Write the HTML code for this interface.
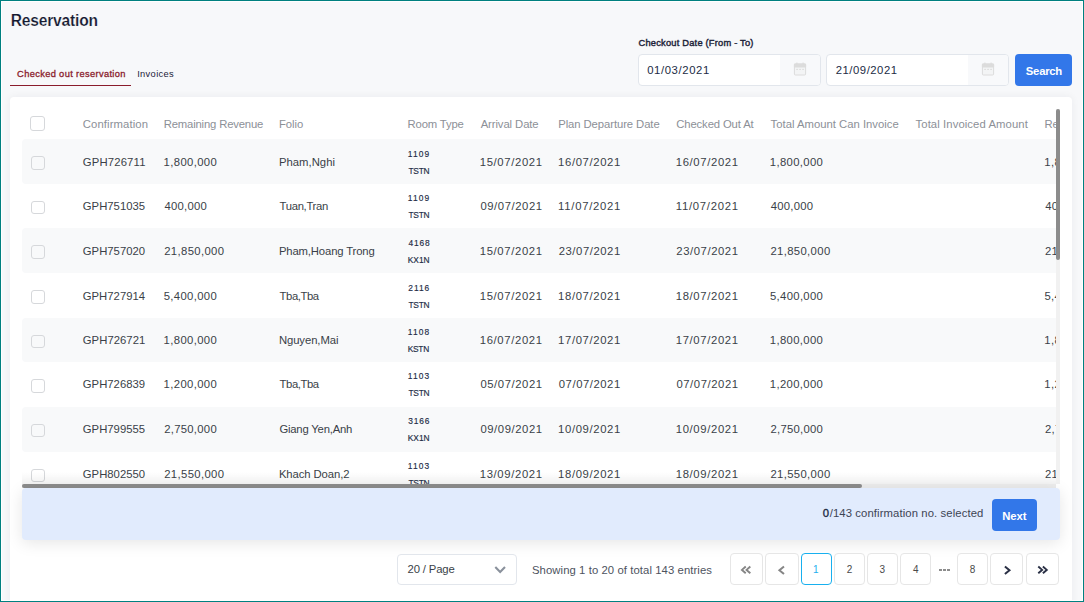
<!DOCTYPE html><html><head><meta charset="utf-8"><title>Reservation</title><style>
html,body{margin:0;padding:0}
body{width:1084px;height:602px;overflow:hidden;background:#f7f8fa;font-family:"Liberation Sans",sans-serif;color:#3a3f48;position:relative}
*{box-sizing:border-box}
.a{position:absolute}
.t{position:absolute;white-space:nowrap}
#frame{position:absolute;left:0;top:0;width:1084px;height:602px;border:1px solid #008080;box-shadow:inset 0 0 0 1px #fff;z-index:50}
.inp{position:absolute;top:54px;height:32px;width:183px;border:1px solid #e2e6ec;border-radius:4px;background:#fff;overflow:hidden}
.addon{position:absolute;right:0;top:0;width:40px;height:30px;background:#f8f9fb}
.btn{position:absolute;background:#3277e9;border-radius:4px}
#card{left:10px;top:97px;width:1062px;height:520px;background:#fff;border-radius:4px;box-shadow:0 0 9px rgba(30,35,50,0.06)}
#tbl{left:22px;top:109px;width:1034px;height:375px;overflow:hidden}
.row{position:absolute;left:0;width:1100px;background:#f8f9fa;border-radius:4px 0 0 4px}
.cb{position:absolute;border:1px solid #d6d8db;border-radius:3px}
.pb{position:absolute;top:553px;height:32px;border:1px solid #e6e6e6;border-radius:4px;background:#fff}
</style></head><body>
<div class="t" style="left:10.80px;top:11px;font-size:15.6px;line-height:19px;letter-spacing:-0.204px;color:#151a30;font-weight:bold;-webkit-text-stroke:0.2px #f7f8fa;">Reservation</div>
<div class="t" style="left:17.08px;top:68px;font-size:9.3px;line-height:12px;letter-spacing:0.346px;color:#8a1c2c;-webkit-text-stroke:0.3px #8a1c2c;">Checked out reservation</div>
<div class="a" style="left:10px;top:85px;width:121px;height:1px;background:#8a1c2c"></div>
<div class="t" style="left:137.13px;top:68px;font-size:9.3px;line-height:12px;letter-spacing:0.357px;color:#1b2138;">Invoices</div>
<div class="t" style="left:638.56px;top:37px;font-size:9.3px;line-height:12px;letter-spacing:0.209px;color:#1c2238;-webkit-text-stroke:0.4px #1c2238;">Checkout Date (From - To)</div>
<div class="inp" style="left:638px"><div class="addon"><svg class="a" style="left:13px;top:7.4px" width="14" height="15" viewBox="0 0 14 15"><rect x="1.4" y="2" width="11.2" height="11" rx="1" fill="#f3f4f5" stroke="#dcdcdc" stroke-width="1"/><rect x="0.9" y="1.6" width="12.2" height="4" rx="1" fill="#dcdcdc"/><rect x="3.3" y="0.6" width="1.2" height="1.6" fill="#dcdcdc"/><rect x="9.5" y="0.6" width="1.2" height="1.6" fill="#dcdcdc"/><rect x="3.4" y="6.9" width="1.3" height="1" fill="#d4d4d4"/><rect x="6.4" y="6.9" width="1.3" height="1" fill="#d4d4d4"/><rect x="9.4" y="6.9" width="1.3" height="1" fill="#d4d4d4"/></svg></div></div>
<div class="inp" style="left:826px"><div class="addon"><svg class="a" style="left:13px;top:7.4px" width="14" height="15" viewBox="0 0 14 15"><rect x="1.4" y="2" width="11.2" height="11" rx="1" fill="#f3f4f5" stroke="#dcdcdc" stroke-width="1"/><rect x="0.9" y="1.6" width="12.2" height="4" rx="1" fill="#dcdcdc"/><rect x="3.3" y="0.6" width="1.2" height="1.6" fill="#dcdcdc"/><rect x="9.5" y="0.6" width="1.2" height="1.6" fill="#dcdcdc"/><rect x="3.4" y="6.9" width="1.3" height="1" fill="#d4d4d4"/><rect x="6.4" y="6.9" width="1.3" height="1" fill="#d4d4d4"/><rect x="9.4" y="6.9" width="1.3" height="1" fill="#d4d4d4"/></svg></div></div>
<div class="t" style="left:647.20px;top:63px;font-size:11.3px;line-height:14px;letter-spacing:0.610px;color:#222b45;">01/03/2021</div>
<div class="t" style="left:835.71px;top:63px;font-size:11.3px;line-height:14px;letter-spacing:0.531px;color:#222b45;">21/09/2021</div>
<div class="btn" style="left:1015px;top:54px;width:57px;height:32px"></div>
<div class="t" style="left:1025.86px;top:64px;font-size:11.3px;line-height:14px;letter-spacing:-0.272px;color:#fff;font-weight:bold;">Search</div>
<div id="card" class="a"></div>
<div id="tbl" class="a">
<div class="cb" style="left:8px;top:7px;width:15px;height:15px;background:#fff"></div>
<div class="t" style="left:60.78px;top:8px;font-size:11.3px;line-height:14px;letter-spacing:0.102px;color:#8c9097;">Confirmation</div>
<div class="t" style="left:141.70px;top:8px;font-size:11.3px;line-height:14px;letter-spacing:-0.169px;color:#8c9097;">Remaining Revenue</div>
<div class="t" style="left:256.90px;top:8px;font-size:11.3px;line-height:14px;letter-spacing:0.003px;color:#8c9097;">Folio</div>
<div class="t" style="left:385.60px;top:8px;font-size:11.3px;line-height:14px;letter-spacing:-0.163px;color:#8c9097;">Room Type</div>
<div class="t" style="left:458.68px;top:8px;font-size:11.3px;line-height:14px;letter-spacing:-0.094px;color:#8c9097;">Arrival Date</div>
<div class="t" style="left:536.20px;top:8px;font-size:11.3px;line-height:14px;letter-spacing:-0.081px;color:#8c9097;">Plan Departure Date</div>
<div class="t" style="left:654.28px;top:8px;font-size:11.3px;line-height:14px;letter-spacing:-0.129px;color:#8c9097;">Checked Out At</div>
<div class="t" style="left:748.56px;top:8px;font-size:11.3px;line-height:14px;letter-spacing:0.004px;color:#8c9097;">Total Amount Can Invoice</div>
<div class="t" style="left:893.56px;top:8px;font-size:11.3px;line-height:14px;letter-spacing:0.086px;color:#8c9097;">Total Invoiced Amount</div>
<div class="t" style="left:1022.40px;top:8px;font-size:11.3px;line-height:14px;letter-spacing:0.000px;color:#8c9097;">Remaining</div>
<div class="row" style="top:30px;height:45px"></div>
<div class="cb" style="left:9.2px;top:47.1px;width:13.6px;height:13.6px"></div>
<div class="t" style="left:60.78px;top:46px;font-size:11.3px;line-height:14px;letter-spacing:0.170px;color:#3a3f48;">GPH726711</div>
<div class="t" style="left:141.62px;top:46px;font-size:11.3px;line-height:14px;letter-spacing:0.354px;color:#3a3f48;">1,800,000</div>
<div class="t" style="left:256.90px;top:46px;font-size:11.3px;line-height:14px;letter-spacing:0.028px;color:#3a3f48;">Pham,Nghi</div>
<div class="t" style="left:457.72px;top:46px;font-size:11.3px;line-height:14px;letter-spacing:0.641px;color:#3a3f48;">15/07/2021</div>
<div class="t" style="left:536.12px;top:46px;font-size:11.3px;line-height:14px;letter-spacing:0.618px;color:#3a3f48;">16/07/2021</div>
<div class="t" style="left:653.72px;top:46px;font-size:11.3px;line-height:14px;letter-spacing:0.641px;color:#3a3f48;">16/07/2021</div>
<div class="t" style="left:747.82px;top:46px;font-size:11.3px;line-height:14px;letter-spacing:0.354px;color:#3a3f48;">1,800,000</div>
<div class="t" style="left:1022.32px;top:46px;font-size:11.3px;line-height:14px;letter-spacing:0.354px;color:#3a3f48;">1,800,000</div>
<div class="t" style="left:385.72px;top:40px;font-size:8.4px;line-height:11px;letter-spacing:1.143px;color:#222b45;-webkit-text-stroke:0.15px #222b45;">1109</div>
<div class="t" style="left:386.43px;top:57px;font-size:8.4px;line-height:11px;letter-spacing:-0.218px;color:#222b45;-webkit-text-stroke:0.15px #222b45;">TSTN</div>
<div class="cb" style="left:9.2px;top:91.7px;width:13.6px;height:13.6px"></div>
<div class="t" style="left:60.78px;top:90px;font-size:11.3px;line-height:14px;letter-spacing:0.020px;color:#3a3f48;">GPH751035</div>
<div class="t" style="left:142.55px;top:90px;font-size:11.3px;line-height:14px;letter-spacing:0.226px;color:#3a3f48;">400,000</div>
<div class="t" style="left:257.56px;top:90px;font-size:11.3px;line-height:14px;letter-spacing:-0.317px;color:#3a3f48;">Tuan,Tran</div>
<div class="t" style="left:458.40px;top:90px;font-size:11.3px;line-height:14px;letter-spacing:0.565px;color:#3a3f48;">09/07/2021</div>
<div class="t" style="left:536.12px;top:90px;font-size:11.3px;line-height:14px;letter-spacing:0.722px;color:#3a3f48;">11/07/2021</div>
<div class="t" style="left:653.72px;top:90px;font-size:11.3px;line-height:14px;letter-spacing:0.744px;color:#3a3f48;">11/07/2021</div>
<div class="t" style="left:748.75px;top:90px;font-size:11.3px;line-height:14px;letter-spacing:0.226px;color:#3a3f48;">400,000</div>
<div class="t" style="left:1023.25px;top:90px;font-size:11.3px;line-height:14px;letter-spacing:0.226px;color:#3a3f48;">400,000</div>
<div class="t" style="left:385.72px;top:84px;font-size:8.4px;line-height:11px;letter-spacing:1.143px;color:#222b45;-webkit-text-stroke:0.15px #222b45;">1109</div>
<div class="t" style="left:386.43px;top:101px;font-size:8.4px;line-height:11px;letter-spacing:-0.218px;color:#222b45;-webkit-text-stroke:0.15px #222b45;">TSTN</div>
<div class="row" style="top:119px;height:45px"></div>
<div class="cb" style="left:9.2px;top:136.4px;width:13.6px;height:13.6px"></div>
<div class="t" style="left:60.78px;top:135px;font-size:11.3px;line-height:14px;letter-spacing:0.022px;color:#3a3f48;">GPH757020</div>
<div class="t" style="left:142.21px;top:135px;font-size:11.3px;line-height:14px;letter-spacing:0.359px;color:#3a3f48;">21,850,000</div>
<div class="t" style="left:256.90px;top:135px;font-size:11.3px;line-height:14px;letter-spacing:-0.138px;color:#3a3f48;">Pham,Hoang Trong</div>
<div class="t" style="left:457.72px;top:135px;font-size:11.3px;line-height:14px;letter-spacing:0.641px;color:#3a3f48;">15/07/2021</div>
<div class="t" style="left:536.71px;top:135px;font-size:11.3px;line-height:14px;letter-spacing:0.553px;color:#3a3f48;">23/07/2021</div>
<div class="t" style="left:654.31px;top:135px;font-size:11.3px;line-height:14px;letter-spacing:0.575px;color:#3a3f48;">23/07/2021</div>
<div class="t" style="left:748.41px;top:135px;font-size:11.3px;line-height:14px;letter-spacing:0.359px;color:#3a3f48;">21,850,000</div>
<div class="t" style="left:1022.91px;top:135px;font-size:11.3px;line-height:14px;letter-spacing:0.359px;color:#3a3f48;">21,850,000</div>
<div class="t" style="left:386.38px;top:129px;font-size:8.4px;line-height:11px;letter-spacing:0.850px;color:#222b45;-webkit-text-stroke:0.15px #222b45;">4168</div>
<div class="t" style="left:385.64px;top:146px;font-size:8.4px;line-height:11px;letter-spacing:0.046px;color:#222b45;-webkit-text-stroke:0.15px #222b45;">KX1N</div>
<div class="cb" style="left:9.2px;top:181.0px;width:13.6px;height:13.6px"></div>
<div class="t" style="left:60.78px;top:180px;font-size:11.3px;line-height:14px;letter-spacing:0.015px;color:#3a3f48;">GPH727914</div>
<div class="t" style="left:141.70px;top:180px;font-size:11.3px;line-height:14px;letter-spacing:0.344px;color:#3a3f48;">5,400,000</div>
<div class="t" style="left:257.56px;top:180px;font-size:11.3px;line-height:14px;letter-spacing:-0.420px;color:#3a3f48;">Tba,Tba</div>
<div class="t" style="left:457.72px;top:180px;font-size:11.3px;line-height:14px;letter-spacing:0.641px;color:#3a3f48;">15/07/2021</div>
<div class="t" style="left:536.12px;top:180px;font-size:11.3px;line-height:14px;letter-spacing:0.618px;color:#3a3f48;">18/07/2021</div>
<div class="t" style="left:653.72px;top:180px;font-size:11.3px;line-height:14px;letter-spacing:0.641px;color:#3a3f48;">18/07/2021</div>
<div class="t" style="left:747.90px;top:180px;font-size:11.3px;line-height:14px;letter-spacing:0.344px;color:#3a3f48;">5,400,000</div>
<div class="t" style="left:1022.40px;top:180px;font-size:11.3px;line-height:14px;letter-spacing:0.344px;color:#3a3f48;">5,400,000</div>
<div class="t" style="left:386.34px;top:174px;font-size:8.4px;line-height:11px;letter-spacing:0.935px;color:#222b45;-webkit-text-stroke:0.15px #222b45;">2116</div>
<div class="t" style="left:386.43px;top:191px;font-size:8.4px;line-height:11px;letter-spacing:-0.218px;color:#222b45;-webkit-text-stroke:0.15px #222b45;">TSTN</div>
<div class="row" style="top:209px;height:44px"></div>
<div class="cb" style="left:9.2px;top:225.6px;width:13.6px;height:13.6px"></div>
<div class="t" style="left:60.78px;top:224px;font-size:11.3px;line-height:14px;letter-spacing:0.045px;color:#3a3f48;">GPH726721</div>
<div class="t" style="left:141.62px;top:224px;font-size:11.3px;line-height:14px;letter-spacing:0.354px;color:#3a3f48;">1,800,000</div>
<div class="t" style="left:256.90px;top:224px;font-size:11.3px;line-height:14px;letter-spacing:-0.083px;color:#3a3f48;">Nguyen,Mai</div>
<div class="t" style="left:457.72px;top:224px;font-size:11.3px;line-height:14px;letter-spacing:0.641px;color:#3a3f48;">16/07/2021</div>
<div class="t" style="left:536.12px;top:224px;font-size:11.3px;line-height:14px;letter-spacing:0.618px;color:#3a3f48;">17/07/2021</div>
<div class="t" style="left:653.72px;top:224px;font-size:11.3px;line-height:14px;letter-spacing:0.641px;color:#3a3f48;">17/07/2021</div>
<div class="t" style="left:747.82px;top:224px;font-size:11.3px;line-height:14px;letter-spacing:0.354px;color:#3a3f48;">1,800,000</div>
<div class="t" style="left:1022.32px;top:224px;font-size:11.3px;line-height:14px;letter-spacing:0.354px;color:#3a3f48;">1,800,000</div>
<div class="t" style="left:385.72px;top:218px;font-size:8.4px;line-height:11px;letter-spacing:1.148px;color:#222b45;-webkit-text-stroke:0.15px #222b45;">1108</div>
<div class="t" style="left:385.64px;top:235px;font-size:8.4px;line-height:11px;letter-spacing:-0.240px;color:#222b45;-webkit-text-stroke:0.15px #222b45;">KSTN</div>
<div class="cb" style="left:9.2px;top:270.2px;width:13.6px;height:13.6px"></div>
<div class="t" style="left:60.78px;top:268px;font-size:11.3px;line-height:14px;letter-spacing:0.021px;color:#3a3f48;">GPH726839</div>
<div class="t" style="left:141.62px;top:268px;font-size:11.3px;line-height:14px;letter-spacing:0.354px;color:#3a3f48;">1,200,000</div>
<div class="t" style="left:257.56px;top:268px;font-size:11.3px;line-height:14px;letter-spacing:-0.420px;color:#3a3f48;">Tba,Tba</div>
<div class="t" style="left:458.40px;top:268px;font-size:11.3px;line-height:14px;letter-spacing:0.565px;color:#3a3f48;">05/07/2021</div>
<div class="t" style="left:536.80px;top:268px;font-size:11.3px;line-height:14px;letter-spacing:0.543px;color:#3a3f48;">07/07/2021</div>
<div class="t" style="left:654.40px;top:268px;font-size:11.3px;line-height:14px;letter-spacing:0.565px;color:#3a3f48;">07/07/2021</div>
<div class="t" style="left:747.82px;top:268px;font-size:11.3px;line-height:14px;letter-spacing:0.354px;color:#3a3f48;">1,200,000</div>
<div class="t" style="left:1022.32px;top:268px;font-size:11.3px;line-height:14px;letter-spacing:0.354px;color:#3a3f48;">1,200,000</div>
<div class="t" style="left:385.72px;top:262px;font-size:8.4px;line-height:11px;letter-spacing:1.148px;color:#222b45;-webkit-text-stroke:0.15px #222b45;">1103</div>
<div class="t" style="left:386.43px;top:279px;font-size:8.4px;line-height:11px;letter-spacing:-0.218px;color:#222b45;-webkit-text-stroke:0.15px #222b45;">TSTN</div>
<div class="row" style="top:298px;height:45px"></div>
<div class="cb" style="left:9.2px;top:314.9px;width:13.6px;height:13.6px"></div>
<div class="t" style="left:60.78px;top:313px;font-size:11.3px;line-height:14px;letter-spacing:0.020px;color:#3a3f48;">GPH799555</div>
<div class="t" style="left:142.21px;top:313px;font-size:11.3px;line-height:14px;letter-spacing:0.280px;color:#3a3f48;">2,750,000</div>
<div class="t" style="left:257.38px;top:313px;font-size:11.3px;line-height:14px;letter-spacing:-0.196px;color:#3a3f48;">Giang Yen,Anh</div>
<div class="t" style="left:458.40px;top:313px;font-size:11.3px;line-height:14px;letter-spacing:0.565px;color:#3a3f48;">09/09/2021</div>
<div class="t" style="left:536.12px;top:313px;font-size:11.3px;line-height:14px;letter-spacing:0.618px;color:#3a3f48;">10/09/2021</div>
<div class="t" style="left:653.72px;top:313px;font-size:11.3px;line-height:14px;letter-spacing:0.641px;color:#3a3f48;">10/09/2021</div>
<div class="t" style="left:748.41px;top:313px;font-size:11.3px;line-height:14px;letter-spacing:0.280px;color:#3a3f48;">2,750,000</div>
<div class="t" style="left:1022.91px;top:313px;font-size:11.3px;line-height:14px;letter-spacing:0.280px;color:#3a3f48;">2,750,000</div>
<div class="t" style="left:386.27px;top:307px;font-size:8.4px;line-height:11px;letter-spacing:0.876px;color:#222b45;-webkit-text-stroke:0.15px #222b45;">3166</div>
<div class="t" style="left:385.64px;top:324px;font-size:8.4px;line-height:11px;letter-spacing:0.046px;color:#222b45;-webkit-text-stroke:0.15px #222b45;">KX1N</div>
<div class="cb" style="left:9.2px;top:359.5px;width:13.6px;height:13.6px"></div>
<div class="t" style="left:60.78px;top:358px;font-size:11.3px;line-height:14px;letter-spacing:0.022px;color:#3a3f48;">GPH802550</div>
<div class="t" style="left:142.21px;top:358px;font-size:11.3px;line-height:14px;letter-spacing:0.359px;color:#3a3f48;">21,550,000</div>
<div class="t" style="left:256.90px;top:358px;font-size:11.3px;line-height:14px;letter-spacing:-0.086px;color:#3a3f48;">Khach Doan,2</div>
<div class="t" style="left:457.72px;top:358px;font-size:11.3px;line-height:14px;letter-spacing:0.641px;color:#3a3f48;">13/09/2021</div>
<div class="t" style="left:536.12px;top:358px;font-size:11.3px;line-height:14px;letter-spacing:0.618px;color:#3a3f48;">18/09/2021</div>
<div class="t" style="left:653.72px;top:358px;font-size:11.3px;line-height:14px;letter-spacing:0.641px;color:#3a3f48;">18/09/2021</div>
<div class="t" style="left:748.41px;top:358px;font-size:11.3px;line-height:14px;letter-spacing:0.359px;color:#3a3f48;">21,550,000</div>
<div class="t" style="left:1022.91px;top:358px;font-size:11.3px;line-height:14px;letter-spacing:0.359px;color:#3a3f48;">21,550,000</div>
<div class="t" style="left:385.72px;top:352px;font-size:8.4px;line-height:11px;letter-spacing:1.148px;color:#222b45;-webkit-text-stroke:0.15px #222b45;">1103</div>
<div class="t" style="left:386.43px;top:369px;font-size:8.4px;line-height:11px;letter-spacing:-0.218px;color:#222b45;-webkit-text-stroke:0.15px #222b45;">TSTN</div>
</div>
<div class="a" style="left:1056px;top:109px;width:4px;height:375px;background:#f1f1f1"></div>
<div class="a" style="left:1056px;top:109px;width:4px;height:151px;background:#8c8c8c;border-radius:2px"></div>
<div class="a" style="left:22px;top:484px;width:1034px;height:4px;background:#ececec"></div>
<div class="a" style="left:22px;top:484px;width:840px;height:4px;background:#8c8c8c;border-radius:2px"></div>
<div class="a" style="left:22px;top:472px;width:1034px;height:12px;background:linear-gradient(rgba(0,0,0,0),rgba(0,0,0,0.05))"></div>
<div class="a" style="left:22px;top:488px;width:1038px;height:51.6px;background:#e1ebfd;border-radius:4px;box-shadow:0 3px 16px rgba(0,0,0,0.10)"></div>
<div class="t" style="left:822.78px;top:506px;font-size:11.3px;line-height:14px;letter-spacing:0.000px;color:#222b45;-webkit-text-stroke:0.35px #222b45;">0</div>
<div class="t" style="left:829.76px;top:506px;font-size:11.3px;line-height:14px;letter-spacing:0.098px;color:#3d4454;">/143 confirmation no. selected</div>
<div class="btn" style="left:992px;top:499px;width:45px;height:32px"></div>
<div class="t" style="left:1002.20px;top:509px;font-size:11.3px;line-height:14px;letter-spacing:-0.013px;color:#fff;font-weight:bold;">Next</div>
<div class="a" style="left:397px;top:554px;width:120px;height:31px;border:1px solid #e2e6ec;border-radius:4px;background:#fff"></div>
<svg class="a" style="left:0;top:0" width="1084" height="602" viewBox="0 0 1084 602"><path d="M495.3 567 L500.15 571.9 L505 567" fill="none" stroke="#8a919c" stroke-width="2.1"/></svg>
<div class="t" style="left:407.61px;top:562px;font-size:11.3px;line-height:14px;letter-spacing:-0.151px;color:#3a3f48;">20 / Page</div>
<div class="t" style="left:532.00px;top:563px;font-size:11.3px;line-height:14px;letter-spacing:0.081px;color:#4d5360;">Showing 1 to 20 of total 143 entries</div>
<div class="pb" style="left:730.0px;width:33.0px;"></div>
<svg class="a" style="left:0;top:0" width="1084" height="602" viewBox="0 0 1084 602"><path d="M745.75 566.47 L741.94 569.90 L745.75 573.33 M750.33 566.47 L746.52 569.90 L750.33 573.33" fill="none" stroke="#858585" stroke-width="1.90"/></svg>
<div class="pb" style="left:765.0px;width:34.0px;"></div>
<svg class="a" style="left:0;top:0" width="1084" height="602" viewBox="0 0 1084 602"><path d="M783.99 566.41 L779.41 570.20 L783.99 573.99" fill="none" stroke="#858585" stroke-width="2.00"/></svg>
<div class="pb" style="left:801.0px;width:31.0px;border:1.5px solid #18b0ef;"></div>
<div class="pb" style="left:834.0px;width:31.0px;"></div>
<div class="pb" style="left:867.0px;width:31.0px;"></div>
<div class="pb" style="left:900.0px;width:31.0px;"></div>
<div class="pb" style="left:957.0px;width:31.0px;"></div>
<div class="t" style="left:813.05px;top:564px;font-size:10px;line-height:12px;letter-spacing:0.000px;color:#25aeee;">1</div>
<div class="t" style="left:846.66px;top:564px;font-size:10px;line-height:12px;letter-spacing:0.000px;color:#4a4a4a;">2</div>
<div class="t" style="left:879.60px;top:564px;font-size:10px;line-height:12px;letter-spacing:0.000px;color:#4a4a4a;">3</div>
<div class="t" style="left:912.99px;top:564px;font-size:10px;line-height:12px;letter-spacing:0.000px;color:#4a4a4a;">4</div>
<div class="t" style="left:969.70px;top:564px;font-size:10px;line-height:12px;letter-spacing:0.000px;color:#4a4a4a;">8</div>
<div class="a" style="left:938.9px;top:569px;width:3px;height:2.1px;background:#8c8c8c"></div><div class="a" style="left:942.7px;top:569px;width:3px;height:2.1px;background:#8c8c8c"></div><div class="a" style="left:946.5px;top:569px;width:3px;height:2.1px;background:#8c8c8c"></div>
<div class="pb" style="left:990.0px;width:33.0px;"></div>
<svg class="a" style="left:0;top:0" width="1084" height="602" viewBox="0 0 1084 602"><path d="M1004.91 566.41 L1009.49 570.20 L1004.91 573.99" fill="none" stroke="#2a3045" stroke-width="2.00"/></svg>
<div class="pb" style="left:1026.0px;width:33.0px;"></div>
<svg class="a" style="left:0;top:0" width="1084" height="602" viewBox="0 0 1084 602"><path d="M1038.27 566.47 L1042.14 569.90 L1038.27 573.33 M1042.89 566.47 L1046.76 569.90 L1042.89 573.33" fill="none" stroke="#2a3045" stroke-width="1.90"/></svg>
<div id="frame"></div>
</body></html>
